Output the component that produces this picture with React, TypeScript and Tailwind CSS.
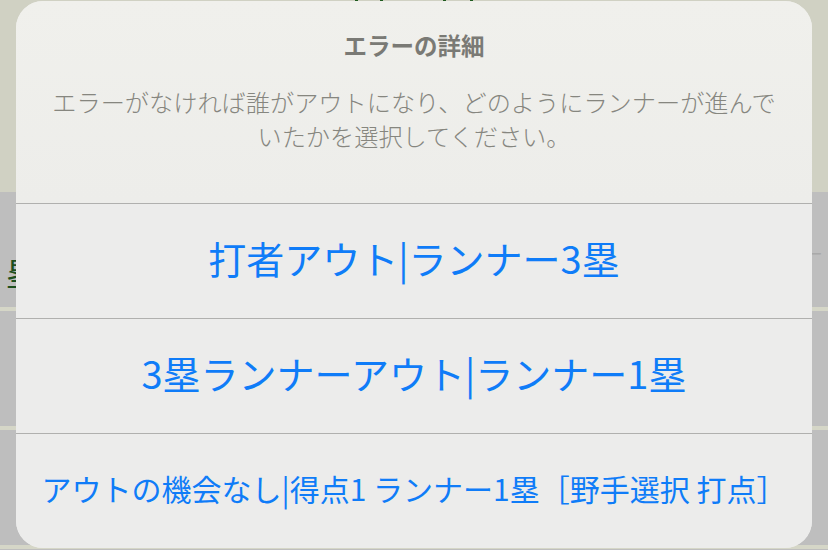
import React from "react";

const jp = { fontFamily: '"Noto Sans CJK JP", "Noto Sans", sans-serif' };

const actions = [
  { label: "打者アウト|ランナー3塁", size: "text-[38px] pb-[8px]" },
  { label: "3塁ランナーアウト|ランナー1塁", size: "text-[38px] pb-[8px]" },
  { label: "アウトの機会なし|得点1 ランナー1塁［野手選択 打点］", size: "text-[30px] pb-[6px]" },
];

function BackgroundRow({ children }: { children?: React.ReactNode }) {
  return (
    <div className="flex h-[119px] flex-col">
      <div className="flex h-[115px] items-center justify-between bg-[#bebebe] px-[6px]">
        {children}
      </div>
      <div className="h-[4px] bg-[#d5d6c7]" />
    </div>
  );
}

export default function App() {
  return (
    <div className="relative h-[550px] w-[828px] overflow-hidden bg-[#bebebe]" style={jp}>
      {/* page behind the sheet */}
      <div className="flex h-[192px] justify-center gap-[22px] bg-[#d0d1c3]">
        <div className="flex gap-[22px]">
          <span className="h-[3px] w-[3px] bg-[#1f5a1f]" />
          <span className="h-[3px] w-[3px] bg-[#1f5a1f]" />
        </div>
        <div className="ml-[38px] flex gap-[24px]">
          <span className="h-[3px] w-[3px] bg-[#1f5a1f]" />
          <span className="h-[3px] w-[3px] bg-[#1f5a1f]" />
        </div>
      </div>
      <BackgroundRow>
        <span className="mt-[44px] text-[32px] leading-none text-[#1d4f1d]">塁</span>
        <span className="text-[22px] leading-none text-[#a9a9a9]">—</span>
      </BackgroundRow>
      <BackgroundRow />
      <BackgroundRow />

      {/* action sheet */}
      <div className="absolute left-[16px] top-[1px] flex w-[796px] flex-col overflow-hidden rounded-[27px] bg-[#ededeb]">
        <div className="flex h-[202px] flex-col items-center bg-gradient-to-b from-[#f0f0ec] to-[#ededea] pt-[29px]">
          <h2 className="text-[23.5px] font-bold leading-[30px] text-[#7a7a75]">エラーの詳細</h2>
          <p className="mt-[25px] text-center text-[24.2px] font-light leading-[34px] text-[#86867f]">
            エラーがなければ誰がアウトになり、どのようにランナーが進んで
            <br />
            いたかを選択してください。
          </p>
        </div>
        {actions.map((a) => (
          <button
            key={a.label}
            className={`flex h-[115px] items-center justify-center whitespace-nowrap border-t border-[#b0b0ae] bg-[#ececeb] text-[#0f7cf8] ${a.size}`}
          >
            {a.label}
          </button>
        ))}
      </div>
    </div>
  );
}
